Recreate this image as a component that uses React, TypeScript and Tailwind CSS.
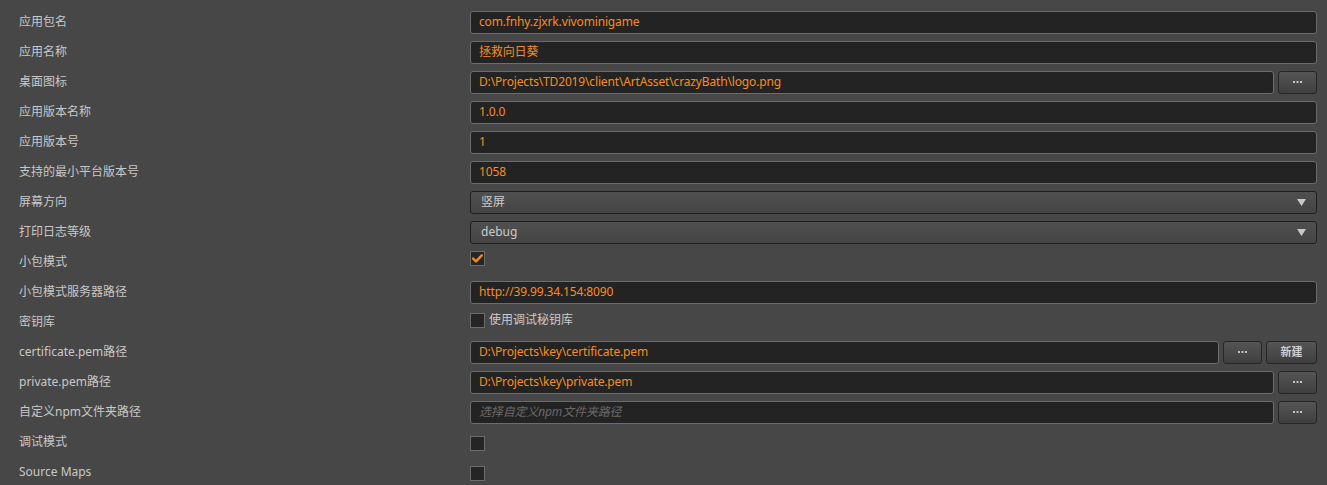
import React from 'react'

const FONT = { fontFamily: '"Noto Sans", "Noto Sans CJK SC", sans-serif' }

type Row =
  | { label: string; kind: 'text'; value: string; browse?: boolean; create?: boolean; placeholder?: boolean }
  | { label: string; kind: 'select'; value: string }
  | { label: string; kind: 'check'; checked: boolean; text?: string; shift: string }

const ROWS: Row[] = [
  { label: '应用包名', kind: 'text', value: 'com.fnhy.zjxrk.vivominigame' },
  { label: '应用名称', kind: 'text', value: '拯救向日葵' },
  { label: '桌面图标', kind: 'text', value: 'D:\\Projects\\TD2019\\client\\ArtAsset\\crazyBath\\logo.png', browse: true },
  { label: '应用版本名称', kind: 'text', value: '1.0.0' },
  { label: '应用版本号', kind: 'text', value: '1' },
  { label: '支持的最小平台版本号', kind: 'text', value: '1058' },
  { label: '屏幕方向', kind: 'select', value: '竖屏' },
  { label: '打印日志等级', kind: 'select', value: 'debug' },
  { label: '小包模式', kind: 'check', checked: true, shift: 'mb-[7px]' },
  { label: '小包模式服务器路径', kind: 'text', value: 'http://39.99.34.154:8090' },
  { label: '密钥库', kind: 'check', checked: false, text: '使用调试秘钥库', shift: 'mb-[4px]' },
  { label: 'certificate.pem路径', kind: 'text', value: 'D:\\Projects\\key\\certificate.pem', browse: true, create: true },
  { label: 'private.pem路径', kind: 'text', value: 'D:\\Projects\\key\\private.pem', browse: true },
  { label: '自定义npm文件夹路径', kind: 'text', value: '选择自定义npm文件夹路径', browse: true, placeholder: true },
  { label: '调试模式', kind: 'check', checked: false, shift: 'mt-[2px]' },
  { label: 'Source Maps', kind: 'check', checked: false, shift: 'mt-[2px]' },
]

function Button({ children, wide }: { children: React.ReactNode; wide?: boolean }) {
  return (
    <div
      className={`flex h-[23px] shrink-0 items-center justify-center rounded-[3px] border border-[#262626] bg-gradient-to-b from-[#555555] to-[#3f3f3f] text-[11px] text-[#cfcfcf] ${wide ? 'w-[51px] font-semibold' : 'w-[39px]'}`}
    >
      {children}
    </div>
  )
}

function Dots() {
  return (
    <svg width="9" height="3" viewBox="0 0 9 3">
      <rect x="0" y="0" width="2" height="2" fill="#c4c4c4" />
      <rect x="3.5" y="0" width="2" height="2" fill="#c4c4c4" />
      <rect x="7" y="0" width="2" height="2" fill="#c4c4c4" />
    </svg>
  )
}

function Field({ row }: { row: Row }) {
  if (row.kind === 'text') {
    return (
      <div className="flex flex-1 items-center gap-[4px]">
        <div className="flex h-[23px] flex-1 items-center rounded-[3px] border border-[#6c6c6c] bg-[#232323] px-[8px] tracking-[-0.15px]">
          <span className={row.placeholder ? 'italic text-[#696969]' : 'text-[#f68d22]'}>{row.value}</span>
        </div>
        {row.browse && (
          <Button>
            <Dots />
          </Button>
        )}
        {row.create && <Button wide>新建</Button>}
      </div>
    )
  }
  if (row.kind === 'select') {
    return (
      <div className="flex h-[23px] flex-1 items-center justify-between rounded-[3px] border border-[#1f1f1f] bg-gradient-to-b from-[#505050] to-[#444444] pl-[10px] pr-[10px] text-[#cacaca]">
        <span>{row.value}</span>
        <svg width="9" height="7" viewBox="0 0 9 7">
          <path d="M0 0 H9 L4.5 7 Z" fill="#c8c8c8" />
        </svg>
      </div>
    )
  }
  return (
    <div className={`flex flex-1 items-center gap-[4px] ${row.shift}`}>
      <div className="flex h-[15px] w-[15px] items-center justify-center border border-[#6c6c6c] bg-[#252525]">
        {row.checked && (
          <svg width="11" height="9" viewBox="0 0 11 9">
            <path d="M1.2 4.6 L4 7.3 L9.8 1.4" stroke="#f4891f" strokeWidth="2.4" fill="none" strokeLinecap="round" strokeLinejoin="round" />
          </svg>
        )}
      </div>
      {row.text && <span className="text-[#cacaca]">{row.text}</span>}
    </div>
  )
}

export default function App() {
  return (
    <div className="h-[485px] w-full overflow-hidden bg-[#474747] pt-[7px] text-[12px]" style={FONT}>
      {ROWS.map(row => (
        <div key={row.label} className="flex h-[30px] items-center pl-[19px] pr-[10px]">
          <div className="w-[451px] shrink-0 text-[#c8c8c8]">{row.label}</div>
          <Field row={row} />
        </div>
      ))}
    </div>
  )
}
